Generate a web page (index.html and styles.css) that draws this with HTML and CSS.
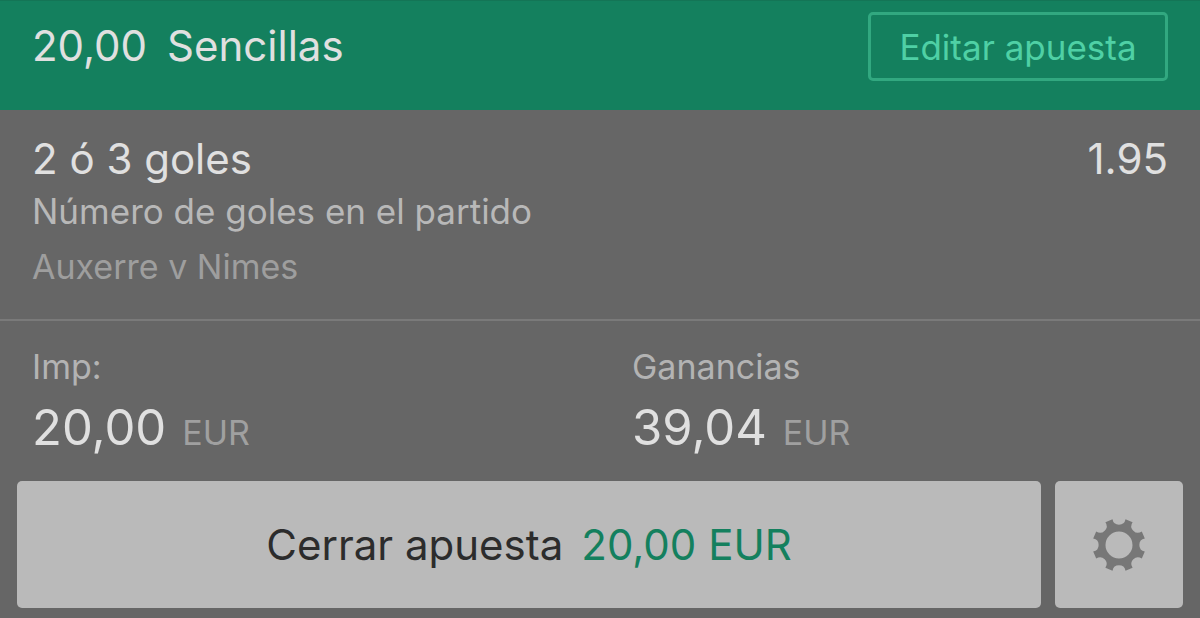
FILE: index.html
```html
<!DOCTYPE html>
<html lang="es">
<head>
  <meta charset="UTF-8" />
  <meta name="viewport" content="width=device-width, initial-scale=1" />
  <title>Mis apuestas</title>
  <link rel="stylesheet" href="styles.css">
</head>
<body>
  <article class="bet">
    <header class="bet-header">
      <h1 class="bet-title"><span>20,00</span><span>Sencillas</span></h1>
      <button type="button" class="edit-button">Editar apuesta</button>
    </header>

    <section class="selection">
      <div class="selection-main">
        <h2 class="selection-name">2 ó 3 goles</h2>
        <span class="selection-odds">1.95</span>
      </div>
      <p class="selection-market">Número de goles en el partido</p>
      <p class="selection-fixture">Auxerre v Nimes</p>
    </section>

    <dl class="totals">
      <div class="total">
        <dt>Imp:</dt>
        <dd>20,00 <span class="currency">EUR</span></dd>
      </div>
      <div class="total">
        <dt>Ganancias</dt>
        <dd>39,04 <span class="currency">EUR</span></dd>
      </div>
    </dl>

    <footer class="actions">
      <button type="button" class="cashout-button">
        <span>Cerrar apuesta</span>
        <span class="cashout-amount">20,00 EUR</span>
      </button>
      <button type="button" class="settings-button" aria-label="Ajustes">
        <svg class="gear" viewBox="-27 -27 54 54" aria-hidden="true">
          <!-- eight teeth with round notches, hole in the middle -->
          <path fill="#777" fill-rule="evenodd" d="
            M-6.5 -25.8 A6.6 6.6 0 0 0 6.5 -25.8
            L13.6 -22.8 A6.6 6.6 0 0 0 22.8 -13.6
            L25.8 -6.5 A6.6 6.6 0 0 0 25.8 6.5
            L22.8 13.6 A6.6 6.6 0 0 0 13.6 22.8
            L6.5 25.8 A6.6 6.6 0 0 0 -6.5 25.8
            L-13.6 22.8 A6.6 6.6 0 0 0 -22.8 13.6
            L-25.8 6.5 A6.6 6.6 0 0 0 -25.8 -6.5
            L-22.8 -13.6 A6.6 6.6 0 0 0 -13.6 -22.8
            Z
            M-13.5 0 A13.5 13.5 0 1 0 13.5 0 A13.5 13.5 0 1 0 -13.5 0 Z
          " />
        </svg>
      </button>
    </footer>
  </article>
</body>
</html>
```

FILE: styles.css
```css
* {
  box-sizing: border-box;
}

body {
  margin: 0;
  background-color: #666;
  color: #e0e0e0;
  font-family: Inter, "Liberation Sans", sans-serif;
}

h1, h2, p, dl, dd {
  margin: 0;
  font-weight: 400;
}

button {
  font-family: inherit;
  cursor: pointer;
}

.bet-header {
  display: flex;
  justify-content: space-between;
  align-items: flex-start;
  padding: 11px 32px 29px;
  border-top: 1px solid #147556;
  background-color: #14805e;
}

.bet-title {
  display: flex;
  gap: 20px;
  font-size: 42px;
  line-height: 68px;
}

.edit-button {
  width: 300px;
  height: 69px;
  padding: 0;
  border: 3px solid #32a880;
  border-radius: 5px;
  background: none;
  color: #4fd0a5;
  font-size: 35px;
}

.selection {
  padding: 24px 32px 25px;
  border-bottom: 2px solid #7a7a7a;
}

.selection-main {
  display: flex;
  justify-content: space-between;
  font-size: 42px;
  line-height: 50px;
}

.selection-name {
  font-size: 42px;
}

.selection-market,
.selection-fixture {
  color: #b8b8b8;
  font-size: 35px;
  line-height: 55px;
}

.selection-fixture {
  color: #9e9e9e;
  font-size: 34px;
}

.totals {
  display: grid;
  grid-template-columns: 1fr 1fr;
  padding-top: 24px;
}

.total {
  padding: 0 32px;
}

.total dt {
  color: #b3b3b3;
  font-size: 34px;
  line-height: 44px;
}

.total dd {
  display: flex;
  align-items: baseline;
  gap: 16px;
  font-size: 49px;
  line-height: 78px;
}

.total .currency {
  color: #a0a0a0;
  font-size: 34px;
  line-height: 40px;
}

.actions {
  display: flex;
  gap: 14px;
  padding: 14px 17px 10px;
}

.cashout-button,
.settings-button {
  display: flex;
  justify-content: center;
  align-items: center;
  height: 127px;
  padding: 0;
  border: 0;
  border-radius: 5px;
  background-color: #bababa;
  color: #2c2c2c;
}

.cashout-button {
  flex: 1;
  gap: 18px;
  font-size: 42px;
}

.cashout-amount {
  color: #14805e;
}

.settings-button {
  width: 128px;
}

.gear {
  width: 54px;
  height: 54px;
}
```
